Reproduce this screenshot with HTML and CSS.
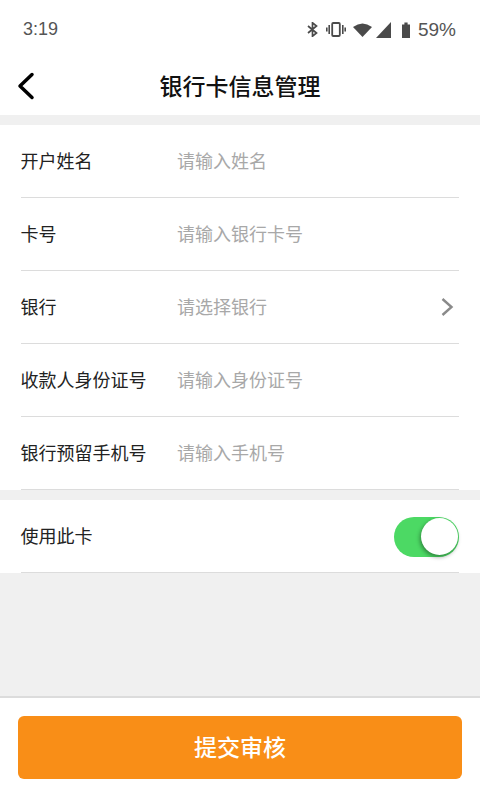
FILE: index.html
```html
<!DOCTYPE html>
<html lang="zh-CN">
<head>
<meta charset="utf-8">
<title>银行卡信息管理</title>
<link rel="stylesheet" href="styles.css">
</head>
<body>
<div class="page">
  <header class="status">
    <span class="time">3:19</span>
    <div class="status-icons">
      <svg class="i-bt" width="11" height="15" viewBox="0 0 11 15"><path d="M1 4l8.5 7-4 3.2V0.8l4 3.2-8.5 7" fill="none" stroke="#4a4a4a" stroke-width="1.7"/></svg>
      <svg class="i-vib" width="20" height="15" viewBox="0 0 20 15"><rect x="6.2" y="1" width="7.6" height="13" rx="1" fill="none" stroke="#4a4a4a" stroke-width="1.8"/><path d="M3.2 3v9M16.8 3v9M0.8 5.5v4M19.2 5.5v4" stroke="#4a4a4a" stroke-width="1.6" fill="none"/></svg>
      <svg class="i-wifi" width="19" height="14" viewBox="0 0 19 14"><path d="M0 4Q9.5-3 19 4L9.5 14Z" fill="#4a4a4a"/></svg>
      <svg class="i-sig" width="15" height="16" viewBox="0 0 15 16"><path d="M0 16L15 0V16Z" fill="#4a4a4a"/></svg>
      <svg class="i-bat" width="8" height="16" viewBox="0 0 8 16"><path d="M0 2.5H2.4V0.5H5.6V2.5H8V16H0Z" fill="#4a4a4a"/></svg>
      <span class="pct">59%</span>
    </div>
  </header>
  <nav class="nav">
    <svg class="back" width="18" height="28" viewBox="0 0 18 28"><path d="M15 2.5L3 14l12 11.5" fill="none" stroke="#000" stroke-width="3.5" stroke-linecap="round" stroke-linejoin="round"/></svg>
    <h1 class="title">银行卡信息管理</h1>
  </nav>
  <main class="content">
    <section class="group">
      <div class="row"><span class="label">开户姓名</span><span class="ph">请输入姓名</span></div>
      <div class="row"><span class="label">卡号</span><span class="ph">请输入银行卡号</span></div>
      <div class="row"><span class="label">银行</span><span class="ph">请选择银行</span>
        <svg class="chev" width="14" height="20" viewBox="0 0 14 20"><path d="M2.5 2l9 8-9 8" fill="none" stroke="#8a8a8a" stroke-width="2.4"/></svg></div>
      <div class="row"><span class="label">收款人身份证号</span><span class="ph">请输入身份证号</span></div>
      <div class="row"><span class="label">银行预留手机号</span><span class="ph">请输入手机号</span></div>
    </section>
    <section class="group">
      <div class="row"><span class="label">使用此卡</span>
        <div class="switch"><span class="knob"></span></div></div>
    </section>
  </main>
  <footer class="footer">
    <button class="submit">提交审核</button>
  </footer>
</div>
</body>
</html>
```
FILE: styles.css
```css
* { box-sizing: border-box; }
html, body { margin: 0; padding: 0; }
body { font-family: "Noto Sans CJK SC", "Liberation Sans", sans-serif; background: #fff; }
.page { width: 480px; height: 800px; display: flex; flex-direction: column; background: #f0f0f0; overflow: hidden; }
.status { height: 56px; flex: none; background: #fff; display: flex; justify-content: space-between; align-items: center; padding: 3px 24px 0 23px; color: #555; font-family: "Liberation Sans", sans-serif; font-size: 18px; }
.status-icons { display: flex; align-items: center; }
.i-vib { margin-left: 8px; }
.i-wifi { margin-left: 7px; }
.i-sig { margin-left: 4px; }
.i-bat { margin-left: 11px; }
.pct { margin-left: 8px; font-size: 19px; }
.nav { height: 59px; flex: none; background: #fff; display: flex; align-items: center; justify-content: center; position: relative; }
.back { position: absolute; left: 17px; top: 16px; }
.title { margin: 0; font-size: 23px; font-weight: 500; color: #111; line-height: 1; }
.content { flex: 1; padding-top: 10px; display: flex; flex-direction: column; gap: 10px; }
.group { background: #fff; padding: 0 21px; }
.row { height: 73px; display: flex; align-items: center; border-bottom: 1px solid #dcdcdc; font-size: 18px; }
.group:last-child .row { justify-content: space-between; }
.label { width: 156.5px; margin-left: -0.5px; margin-bottom: 2px; color: #222; flex: none; }
.ph { color: #a8a8a8; flex: 1; margin-bottom: 2px; }
.chev { margin-right: 5px; flex: none; }
.switch { width: 65px; height: 40px; margin-top: 2px; border-radius: 20px; background: #4cd964; position: relative; flex: none; }
.knob { position: absolute; right: 1px; top: 1px; width: 37px; height: 37px; border-radius: 50%; background: #fff; box-shadow: -1px 2px 4px rgba(0,0,0,.4); }
.footer { height: 104px; flex: none; background: #fff; border-top: 2px solid #dcdcdc; padding: 18px 18px 0; }
.submit { display: block; width: 100%; height: 63px; border: 0; border-radius: 6px; background: #f98e17; color: #fff; font: 500 23px "Noto Sans CJK SC", sans-serif; padding: 0 0 3px; }
```
